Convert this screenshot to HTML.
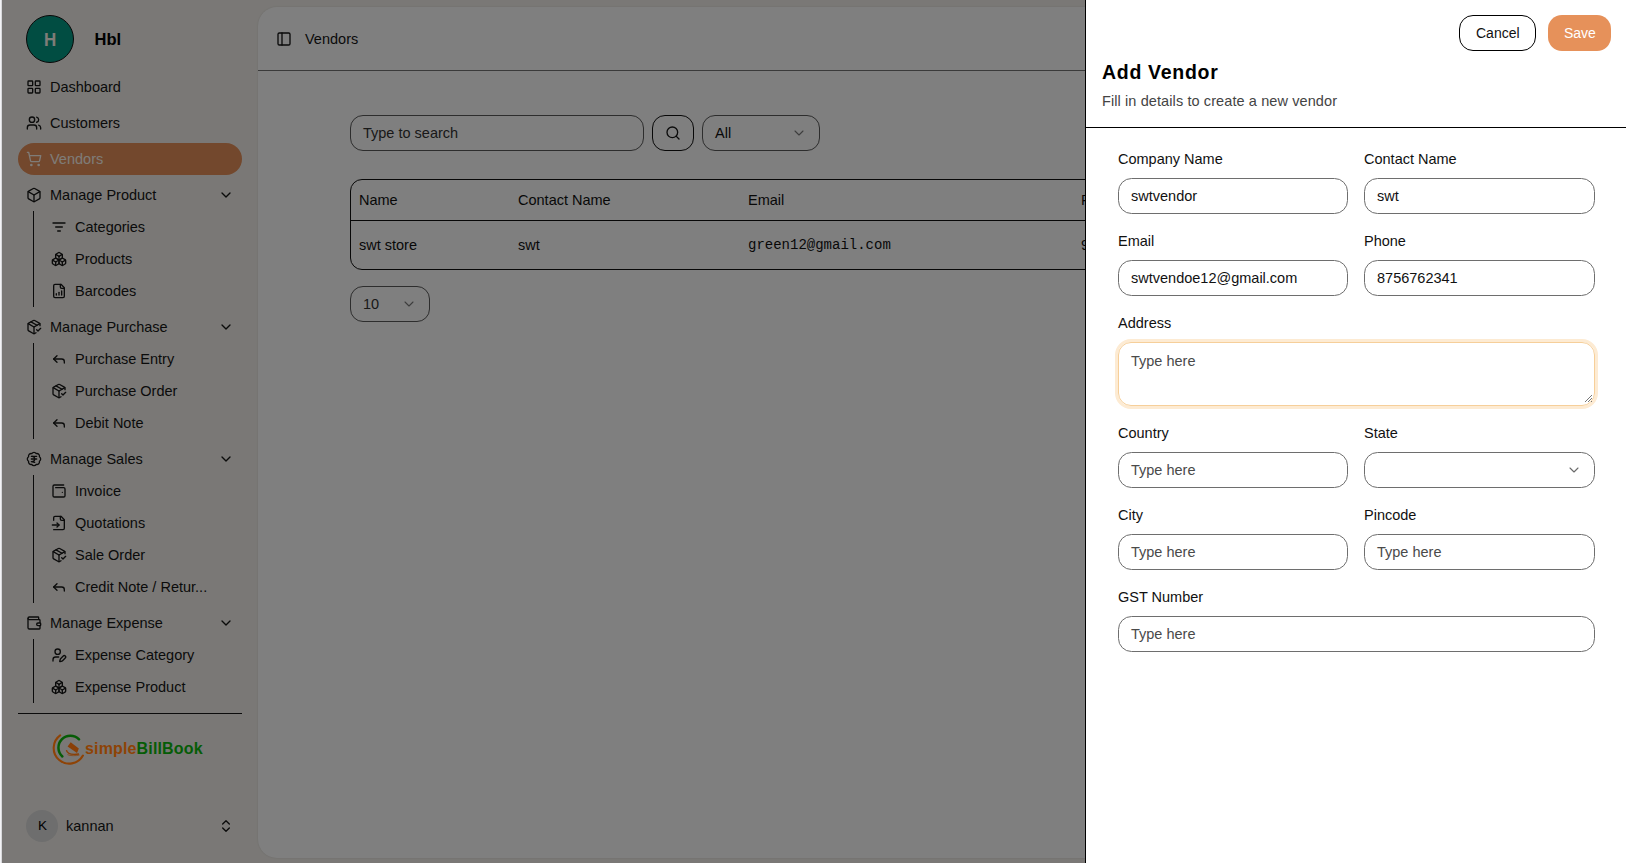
<!DOCTYPE html>
<html><head><meta charset="utf-8">
<style>
*{box-sizing:border-box;margin:0;padding:0}
html,body{width:1626px;height:863px;overflow:hidden;background:#f4f1ec;font-family:"Liberation Sans",sans-serif;color:#161616}
.a{position:absolute}
.t{position:absolute;white-space:nowrap;line-height:1;font-size:14.5px}
svg.i{position:absolute;width:16px;height:16px;fill:none;stroke:#161616;stroke-width:2;stroke-linecap:round;stroke-linejoin:round}
#side .t{color:#161616}
.vl{position:absolute;left:33px;width:1px;background:#161616}
#card{position:absolute;left:258px;top:7px;width:1361px;height:851px;background:#fff;border-radius:19px;box-shadow:0 0 2px rgba(0,0,0,.12)}
#ov{position:absolute;left:2px;top:0;width:1084px;height:863px;background:rgba(0,0,0,.5)}
#strip{position:absolute;left:0;top:0;width:2px;height:863px;background:linear-gradient(90deg,#f3f3f6 0,#f3f3f6 1px,#d8d8db 1px)}
#sheet{position:absolute;left:1085px;top:0;width:541px;height:863px;background:#fff;border-left:1px solid #000}
.lbl{position:absolute;white-space:nowrap;line-height:1;font-size:14.5px;color:#111}
.inp{position:absolute;height:36px;border:1px solid #6b6b6b;border-radius:13px;background:#fff}
.inp span{position:absolute;left:12px;white-space:nowrap;line-height:1;font-size:14.5px}
.ph{color:#4a4a4a}
</style></head><body>
<div id="side">
<div class="a" style="left:26px;top:15px;width:48px;height:48px;border-radius:50%;background:#039a85;border:1px solid #111"></div>
<div class="t" style="left:44.2px;top:31.01px;font-size:18px;color:#fffaf0;font-weight:bold;transform:scaleX(0.94);transform-origin:0 0;">H</div>
<div class="t" style="left:94.5px;top:30.94px;font-size:16.5px;color:#000;font-weight:bold;">Hbl</div>
<div class="a" style="left:18px;top:143px;width:224px;height:32px;border-radius:16px;background:#e6905a"></div>
<svg class="i" viewBox="0 0 24 24" style="left:26px;top:79px;width:16px;height:16px;"><rect x="3" y="3" width="7" height="7" rx="1"/><rect x="14" y="3" width="7" height="7" rx="1"/><rect x="14" y="14" width="7" height="7" rx="1"/><rect x="3" y="14" width="7" height="7" rx="1"/></svg>
<div class="t" style="left:50px;top:79.92px;">Dashboard</div>
<svg class="i" viewBox="0 0 24 24" style="left:26px;top:115px;width:16px;height:16px;"><path d="M16 21v-2a4 4 0 0 0-4-4H6a4 4 0 0 0-4 4v2"/><circle cx="9" cy="7" r="4"/><path d="M22 21v-2a4 4 0 0 0-3-3.87"/><path d="M16 3.13a4 4 0 0 1 0 7.75"/></svg>
<div class="t" style="left:50px;top:115.92px;">Customers</div>
<svg class="i" viewBox="0 0 24 24" style="left:26px;top:151px;width:16px;height:16px;stroke:#fff8f0;"><circle cx="8" cy="21" r="1"/><circle cx="19" cy="21" r="1"/><path d="M2.05 2.05h2l2.66 12.42a2 2 0 0 0 2 1.58h9.78a2 2 0 0 0 1.95-1.57l1.65-7.43H5.12"/></svg>
<div class="t" style="left:50px;top:151.92px;color:#fff8f0;">Vendors</div>
<svg class="i" viewBox="0 0 24 24" style="left:26px;top:187px;width:16px;height:16px;"><path d="M21 8a2 2 0 0 0-1-1.73l-7-4a2 2 0 0 0-2 0l-7 4A2 2 0 0 0 3 8v8a2 2 0 0 0 1 1.73l7 4a2 2 0 0 0 2 0l7-4A2 2 0 0 0 21 16Z"/><path d="m3.3 7 8.7 5 8.7-5"/><path d="M12 22V12"/></svg>
<div class="t" style="left:50px;top:187.92px;">Manage Product</div>
<svg class="i" viewBox="0 0 24 24" style="left:218px;top:187px;width:16px;height:16px;"><path d="m6 9 6 6 6-6"/></svg>
<div class="vl" style="top:211px;height:96px"></div>
<svg class="i" viewBox="0 0 24 24" style="left:51px;top:219px;width:16px;height:16px;"><path d="M3 6h18"/><path d="M7 12h10"/><path d="M10 18h4"/></svg>
<div class="t" style="left:75px;top:219.92px;">Categories</div>
<svg class="i" viewBox="0 0 24 24" style="left:51px;top:251px;width:16px;height:16px;"><path d="M2.97 12.92A2 2 0 0 0 2 14.63v3.24a2 2 0 0 0 .97 1.71l3 1.8a2 2 0 0 0 2.06 0L12 19v-5.5l-5-3-4.03 2.42Z"/><path d="m7 16.5-4.74-2.85"/><path d="m7 16.5 5-3"/><path d="M7 16.5v5.17"/><path d="M12 13.5V19l3.97 2.38a2 2 0 0 0 2.06 0l3-1.8a2 2 0 0 0 .97-1.71v-3.24a2 2 0 0 0-.97-1.71L17 10.5l-5 3Z"/><path d="m17 16.5-5-3"/><path d="m17 16.5 4.74-2.85"/><path d="M17 16.5v5.17"/><path d="M7.97 4.42A2 2 0 0 0 7 6.13v4.37l5 3 5-3V6.13a2 2 0 0 0-.97-1.71l-3-1.8a2 2 0 0 0-2.06 0l-3 1.8Z"/><path d="M12 8 7.26 5.15"/><path d="m12 8 4.74-2.85"/><path d="M12 13.5V8"/></svg>
<div class="t" style="left:75px;top:251.92px;">Products</div>
<svg class="i" viewBox="0 0 24 24" style="left:51px;top:283px;width:16px;height:16px;"><path d="M15 2H6a2 2 0 0 0-2 2v16a2 2 0 0 0 2 2h12a2 2 0 0 0 2-2V7Z"/><path d="M14 2v4a2 2 0 0 0 2 2h4"/><path d="M8 18v-2"/><path d="M12 18v-4"/><path d="M16 18v-6"/></svg>
<div class="t" style="left:75px;top:283.92px;">Barcodes</div>
<svg class="i" viewBox="0 0 24 24" style="left:26px;top:319px;width:16px;height:16px;"><path d="m16 16 2 2 4-4"/><path d="M21 10V8a2 2 0 0 0-1-1.73l-7-4a2 2 0 0 0-2 0l-7 4A2 2 0 0 0 3 8v8a2 2 0 0 0 1 1.73l7 4a2 2 0 0 0 2 0l2-1.14"/><path d="m7.5 4.27 9 5.15"/><path d="M3.29 7 12 12l8.71-5"/><path d="M12 22V12"/></svg>
<div class="t" style="left:50px;top:319.92px;">Manage Purchase</div>
<svg class="i" viewBox="0 0 24 24" style="left:218px;top:319px;width:16px;height:16px;"><path d="m6 9 6 6 6-6"/></svg>
<div class="vl" style="top:343px;height:96px"></div>
<svg class="i" viewBox="0 0 24 24" style="left:51px;top:351px;width:16px;height:16px;"><polyline points="9 17 4 12 9 7"/><path d="M20 18v-2a4 4 0 0 0-4-4H4"/></svg>
<div class="t" style="left:75px;top:351.92px;">Purchase Entry</div>
<svg class="i" viewBox="0 0 24 24" style="left:51px;top:383px;width:16px;height:16px;"><path d="m16 16 2 2 4-4"/><path d="M21 10V8a2 2 0 0 0-1-1.73l-7-4a2 2 0 0 0-2 0l-7 4A2 2 0 0 0 3 8v8a2 2 0 0 0 1 1.73l7 4a2 2 0 0 0 2 0l2-1.14"/><path d="m7.5 4.27 9 5.15"/><path d="M3.29 7 12 12l8.71-5"/><path d="M12 22V12"/></svg>
<div class="t" style="left:75px;top:383.92px;">Purchase Order</div>
<svg class="i" viewBox="0 0 24 24" style="left:51px;top:415px;width:16px;height:16px;"><polyline points="9 17 4 12 9 7"/><path d="M20 18v-2a4 4 0 0 0-4-4H4"/></svg>
<div class="t" style="left:75px;top:415.92px;">Debit Note</div>
<svg class="i" viewBox="0 0 24 24" style="left:26px;top:451px;width:16px;height:16px;"><path d="M3.85 8.62a4 4 0 0 1 4.78-4.77 4 4 0 0 1 6.74 0 4 4 0 0 1 4.78 4.78 4 4 0 0 1 0 6.74 4 4 0 0 1-4.77 4.78 4 4 0 0 1-6.75 0 4 4 0 0 1-4.78-4.77 4 4 0 0 1 0-6.76Z"/><path d="M8 8h8"/><path d="M8 12h8"/><path d="m13 17-5-1h1a4 4 0 0 0 0-8"/></svg>
<div class="t" style="left:50px;top:451.92px;">Manage Sales</div>
<svg class="i" viewBox="0 0 24 24" style="left:218px;top:451px;width:16px;height:16px;"><path d="m6 9 6 6 6-6"/></svg>
<div class="vl" style="top:475px;height:128px"></div>
<svg class="i" viewBox="0 0 24 24" style="left:51px;top:483px;width:16px;height:16px;"><path d="M17 14h.01"/><path d="M7 7h12a2 2 0 0 1 2 2v10a2 2 0 0 1-2 2H5a2 2 0 0 1-2-2V5a2 2 0 0 1 2-2h14"/></svg>
<div class="t" style="left:75px;top:483.92px;">Invoice</div>
<svg class="i" viewBox="0 0 24 24" style="left:51px;top:515px;width:16px;height:16px;"><path d="M4 22h14a2 2 0 0 0 2-2V7l-5-5H6a2 2 0 0 0-2 2v4"/><path d="M14 2v4a2 2 0 0 0 2 2h4"/><path d="M2 15h10"/><path d="m9 18 3-3-3-3"/></svg>
<div class="t" style="left:75px;top:515.92px;">Quotations</div>
<svg class="i" viewBox="0 0 24 24" style="left:51px;top:547px;width:16px;height:16px;"><path d="m16 16 2 2 4-4"/><path d="M21 10V8a2 2 0 0 0-1-1.73l-7-4a2 2 0 0 0-2 0l-7 4A2 2 0 0 0 3 8v8a2 2 0 0 0 1 1.73l7 4a2 2 0 0 0 2 0l2-1.14"/><path d="m7.5 4.27 9 5.15"/><path d="M3.29 7 12 12l8.71-5"/><path d="M12 22V12"/></svg>
<div class="t" style="left:75px;top:547.92px;">Sale Order</div>
<svg class="i" viewBox="0 0 24 24" style="left:51px;top:579px;width:16px;height:16px;"><polyline points="9 17 4 12 9 7"/><path d="M20 18v-2a4 4 0 0 0-4-4H4"/></svg>
<div class="t" style="left:75px;top:579.92px;">Credit Note / Retur...</div>
<svg class="i" viewBox="0 0 24 24" style="left:26px;top:615px;width:16px;height:16px;"><path d="M19 7V4a1 1 0 0 0-1-1H5a2 2 0 0 0 0 4h15a1 1 0 0 1 1 1v4h-3a2 2 0 0 0 0 4h3a1 1 0 0 0 1-1v-2a1 1 0 0 0-1-1"/><path d="M3 5v14a2 2 0 0 0 2 2h15a1 1 0 0 0 1-1v-4"/></svg>
<div class="t" style="left:50px;top:615.92px;">Manage Expense</div>
<svg class="i" viewBox="0 0 24 24" style="left:218px;top:615px;width:16px;height:16px;"><path d="m6 9 6 6 6-6"/></svg>
<div class="vl" style="top:639px;height:64px"></div>
<svg class="i" viewBox="0 0 24 24" style="left:51px;top:647px;width:16px;height:16px;"><path d="M11.5 15H7a4 4 0 0 0-4 4v2"/><path d="M21.378 16.626a1 1 0 0 0-3.004-3.004l-4.01 4.012a2 2 0 0 0-.506.854l-.837 2.87a.5.5 0 0 0 .62.62l2.87-.837a2 2 0 0 0 .854-.506z"/><circle cx="10" cy="7" r="4"/></svg>
<div class="t" style="left:75px;top:647.92px;">Expense Category</div>
<svg class="i" viewBox="0 0 24 24" style="left:51px;top:679px;width:16px;height:16px;"><path d="M2.97 12.92A2 2 0 0 0 2 14.63v3.24a2 2 0 0 0 .97 1.71l3 1.8a2 2 0 0 0 2.06 0L12 19v-5.5l-5-3-4.03 2.42Z"/><path d="m7 16.5-4.74-2.85"/><path d="m7 16.5 5-3"/><path d="M7 16.5v5.17"/><path d="M12 13.5V19l3.97 2.38a2 2 0 0 0 2.06 0l3-1.8a2 2 0 0 0 .97-1.71v-3.24a2 2 0 0 0-.97-1.71L17 10.5l-5 3Z"/><path d="m17 16.5-5-3"/><path d="m17 16.5 4.74-2.85"/><path d="M17 16.5v5.17"/><path d="M7.97 4.42A2 2 0 0 0 7 6.13v4.37l5 3 5-3V6.13a2 2 0 0 0-.97-1.71l-3-1.8a2 2 0 0 0-2.06 0l-3 1.8Z"/><path d="M12 8 7.26 5.15"/><path d="m12 8 4.74-2.85"/><path d="M12 13.5V8"/></svg>
<div class="t" style="left:75px;top:679.92px;">Expense Product</div>
<div class="a" style="left:18px;top:713px;width:224px;height:1px;background:#161616"></div>
<div class="a" style="left:26px;top:810px;width:32px;height:32px;border-radius:50%;background:#dcdcdc"></div>
<div class="t" style="left:38px;top:819.41px;font-size:13.5px;color:#000;">K</div>
<div class="t" style="left:66px;top:818.92px;">kannan</div>
<svg class="i" viewBox="0 0 24 24" style="left:218px;top:818px;width:16px;height:16px;"><path d="m7 15 5 5 5-5"/><path d="m7 9 5-5 5 5"/></svg>
</div>
<div id="card">
<svg class="i" viewBox="0 0 24 24" style="left:18px;top:24px;width:16px;height:16px;stroke-width:2;"><rect width="18" height="18" x="3" y="3" rx="2"/><path d="M9 3v18"/></svg>
<div class="t" style="left:47px;top:24.62px;">Vendors</div>
<div class="a" style="left:0;top:63px;width:1361px;height:1px;background:#747474"></div>
<div class="a" style="left:92px;top:108px;width:294px;height:36px;border:1px solid #5a5a5a;border-radius:13px"></div>
<div class="t" style="left:105px;top:118.62px;color:#333;">Type to search</div>
<div class="a" style="left:394px;top:108px;width:42px;height:36px;border:1.5px solid #111;border-radius:13px"></div>
<svg class="i" viewBox="0 0 24 24" style="left:406.9px;top:117.8px;width:16px;height:16px;stroke-width:2;"><circle cx="11" cy="11" r="8"/><path d="m21 21-4.3-4.3"/></svg>
<div class="a" style="left:444px;top:108px;width:118px;height:36px;border:1px solid #5a5a5a;border-radius:13px"></div>
<div class="t" style="left:457px;top:118.62px;color:#111;">All</div>
<svg class="i" viewBox="0 0 24 24" style="left:533px;top:118px;width:16px;height:16px;stroke:#7a7a7a;stroke-width:1.6;"><path d="m6 9 6 6 6-6"/></svg>
<div class="a" style="left:92px;top:172px;width:1300px;height:91px;border:1px solid #111;border-radius:12px"></div>
<div class="a" style="left:93px;top:213px;width:1300px;height:1px;background:#111"></div>
<div class="t" style="left:101px;top:185.92px;color:#111;">Name</div>
<div class="t" style="left:260px;top:185.92px;color:#111;">Contact Name</div>
<div class="t" style="left:490px;top:185.92px;color:#111;">Email</div>
<div class="t" style="left:823px;top:185.92px;color:#111;">Phone</div>
<div class="t" style="left:101px;top:231.22px;color:#111;">swt store</div>
<div class="t" style="left:260px;top:231.22px;color:#111;">swt</div>
<div class="t" style="left:490px;top:231.46px;font-size:14px;color:#111;font-family:'Liberation Mono',monospace;">green12@gmail.com</div>
<div class="t" style="left:823px;top:231.22px;color:#111;">9876543210</div>
<div class="a" style="left:92px;top:279px;width:80px;height:36px;border:1px solid #5a5a5a;border-radius:13px"></div>
<div class="t" style="left:105px;top:289.92px;color:#333;">10</div>
<svg class="i" viewBox="0 0 24 24" style="left:143px;top:289px;width:16px;height:16px;stroke:#7a7a7a;stroke-width:1.6;"><path d="m6 9 6 6 6-6"/></svg>
</div>
<div id="ov"></div>
<div id="strip"></div>
<svg class="a" style="left:50px;top:730px;width:40px;height:38px" viewBox="50 730 40 38">
<path d="M60.13 735.38 A15.6 15.6 0 1 0 82.94 755.56" fill="none" stroke="#8e4306" stroke-width="2.1" stroke-linecap="round"/>
<path d="M79.03 739.26 A12 12 0 1 0 62.37 756.52" fill="none" stroke="#065c06" stroke-width="2.5" stroke-linecap="round"/>
<path d="M70.7 742.3 L78.8 748.6 L77 753 L67.6 746.4 Z" fill="#8a3f06"/>
<path d="M66.4 750.2 C67 753.5 72 755 79 754" fill="none" stroke="#8a3f06" stroke-width="1.3"/>
<path d="M67.5 754.6 C70 756 76 756 79.5 755" fill="none" stroke="#8a3f06" stroke-width="0.9" opacity="0.8"/>
</svg>
<div class="t" style="left:85px;top:740.98px;font-size:16px;font-weight:bold;letter-spacing:0.15px;"><span style="color:#8e4306">simple</span><span style="color:#065c06">BillBook</span></div>
<div id="sheet">
<div class="a" style="left:373px;top:15px;width:77px;height:36px;border:1px solid #000;border-radius:14px"></div>
<div class="t" style="left:390px;top:26.16px;font-size:14px;color:#111;">Cancel</div>
<div class="a" style="left:462px;top:15px;width:63px;height:36px;border-radius:14px;background:#e6915a"></div>
<div class="t" style="left:478px;top:26.16px;font-size:14px;color:#fff;">Save</div>
<div class="t" style="left:16px;top:62.87px;font-size:19.5px;color:#000;font-weight:bold;letter-spacing:0.7px;">Add Vendor</div>
<div class="t" style="left:16px;top:93.52px;color:#444;letter-spacing:0.1px;">Fill in details to create a new vendor</div>
<div class="a" style="left:0;top:127px;width:541px;height:1px;background:#000"></div>
<div class="t" style="left:32px;top:151.92px;color:#111;">Company Name</div>
<div class="a" style="left:32px;top:178px;width:230px;height:36px;border:1px solid #6e6e6e;border-radius:13.5px"></div>
<div class="t" style="left:45px;top:188.92px;color:#111;">swtvendor</div>
<div class="t" style="left:278px;top:151.92px;color:#111;">Contact Name</div>
<div class="a" style="left:278px;top:178px;width:231px;height:36px;border:1px solid #6e6e6e;border-radius:13.5px"></div>
<div class="t" style="left:291px;top:188.92px;color:#111;">swt</div>
<div class="t" style="left:32px;top:233.92px;color:#111;">Email</div>
<div class="a" style="left:32px;top:260px;width:230px;height:36px;border:1px solid #6e6e6e;border-radius:13.5px"></div>
<div class="t" style="left:45px;top:270.92px;color:#111;">swtvendoe12@gmail.com</div>
<div class="t" style="left:278px;top:233.92px;color:#111;">Phone</div>
<div class="a" style="left:278px;top:260px;width:231px;height:36px;border:1px solid #6e6e6e;border-radius:13.5px"></div>
<div class="t" style="left:291px;top:270.92px;color:#111;">8756762341</div>
<div class="t" style="left:32px;top:315.92px;color:#111;">Address</div>
<div class="a" style="left:29px;top:339px;width:483px;height:70px;border:3px solid #fdebd3;border-radius:16px"></div>
<div class="a" style="left:32px;top:342px;width:477px;height:64px;border:1px solid #f6cf9a;border-radius:13px"></div>
<div class="t" style="left:45px;top:353.92px;color:#4a4a4a;">Type here</div>
<svg class="a" style="left:497px;top:393px;width:10px;height:10px" viewBox="0 0 10 10"><path d="M9 2 L2 9 M9 5 L5 9 M9 8 L8 9" stroke="#777" stroke-width="1"/></svg>
<div class="t" style="left:32px;top:425.92px;color:#111;">Country</div>
<div class="a" style="left:32px;top:452px;width:230px;height:36px;border:1px solid #6e6e6e;border-radius:13.5px"></div>
<div class="t" style="left:45px;top:462.92px;color:#4a4a4a;">Type here</div>
<div class="t" style="left:278px;top:425.92px;color:#111;">State</div>
<div class="a" style="left:278px;top:452px;width:231px;height:36px;border:1px solid #6e6e6e;border-radius:13.5px"></div>
<svg class="i" viewBox="0 0 24 24" style="left:480px;top:462px;width:16px;height:16px;stroke:#6a6a6a;stroke-width:1.6;"><path d="m6 9 6 6 6-6"/></svg>
<div class="t" style="left:32px;top:507.92px;color:#111;">City</div>
<div class="a" style="left:32px;top:534px;width:230px;height:36px;border:1px solid #6e6e6e;border-radius:13.5px"></div>
<div class="t" style="left:45px;top:544.92px;color:#4a4a4a;">Type here</div>
<div class="t" style="left:278px;top:507.92px;color:#111;">Pincode</div>
<div class="a" style="left:278px;top:534px;width:231px;height:36px;border:1px solid #6e6e6e;border-radius:13.5px"></div>
<div class="t" style="left:291px;top:544.92px;color:#4a4a4a;">Type here</div>
<div class="t" style="left:32px;top:589.92px;color:#111;">GST Number</div>
<div class="a" style="left:32px;top:616px;width:477px;height:36px;border:1px solid #6e6e6e;border-radius:13.5px"></div>
<div class="t" style="left:45px;top:626.92px;color:#4a4a4a;">Type here</div>
</div>
</body></html>
